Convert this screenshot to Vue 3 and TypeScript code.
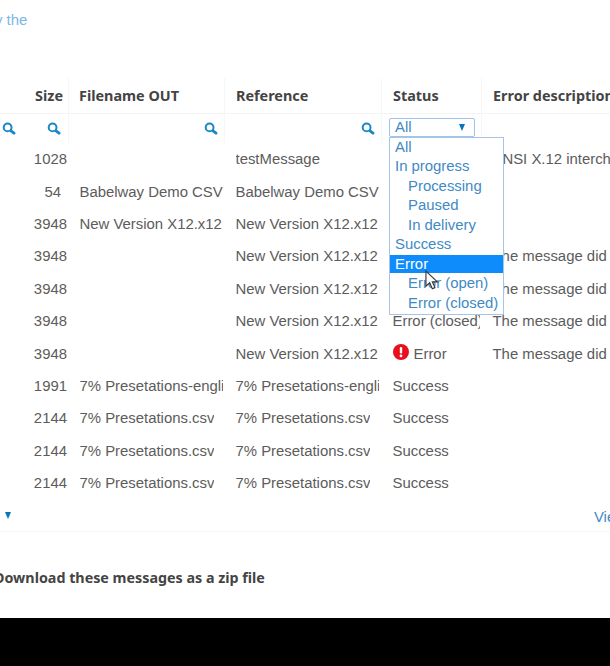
<script setup lang="ts">
interface Row { size: string; out: string; ref: string; status: string; err: string; icon?: boolean }
const rows: Row[] = [
  { size: '1028', out: '', ref: 'testMessage', status: '', err: 'ANSI X.12 interchange' },
  { size: '54', out: 'Babelway Demo CSV', ref: 'Babelway Demo CSV', status: '', err: '' },
  { size: '3948', out: 'New Version X12.x12', ref: 'New Version X12.x12', status: '', err: '' },
  { size: '3948', out: '', ref: 'New Version X12.x12', status: '', err: 'The message did not' },
  { size: '3948', out: '', ref: 'New Version X12.x12', status: '', err: 'The message did not' },
  { size: '3948', out: '', ref: 'New Version X12.x12', status: 'Error (closed)', err: 'The message did not' },
  { size: '3948', out: '', ref: 'New Version X12.x12', status: 'Error', err: 'The message did not', icon: true },
  { size: '1991', out: '7% Presetations-english.csv', ref: '7% Presetations-english.csv', status: 'Success', err: '' },
  { size: '2144', out: '7% Presetations.csv', ref: '7% Presetations.csv', status: 'Success', err: '' },
  { size: '2144', out: '7% Presetations.csv', ref: '7% Presetations.csv', status: 'Success', err: '' },
  { size: '2144', out: '7% Presetations.csv', ref: '7% Presetations.csv', status: 'Success', err: '' },
]
const options = [
  { t: 'All' }, { t: 'In progress' }, { t: 'Processing', sub: true }, { t: 'Paused', sub: true },
  { t: 'In delivery', sub: true }, { t: 'Success' }, { t: 'Error', active: true },
  { t: 'Error (open)', sub: true }, { t: 'Error (closed)', sub: true },
]
</script>

<template>
  <div class="page">
    <div class="content">
      <div class="intro">y the</div>
      <div class="table">
        <div class="row head">
          <div class="c c0"></div>
          <div class="c c1 right">Size</div>
          <div class="c c2 sep">Filename OUT</div>
          <div class="c c3 sep">Reference</div>
          <div class="c c4 sep">Status</div>
          <div class="c c5 sep">Error description</div>
        </div>
        <div class="row filter">
          <div class="c c0 icon-cell">
            <svg class="mag" viewBox="0 0 14 13"><circle cx="5.6" cy="5.4" r="3.9" /><path class="h" d="M9 8.8l3 2.4" /></svg>
          </div>
          <div class="c c1 icon-cell">
            <svg class="mag" viewBox="0 0 14 13"><circle cx="5.6" cy="5.4" r="3.9" /><path class="h" d="M9 8.8l3 2.4" /></svg>
          </div>
          <div class="c c2 sep icon-cell">
            <svg class="mag" viewBox="0 0 14 13"><circle cx="5.6" cy="5.4" r="3.9" /><path class="h" d="M9 8.8l3 2.4" /></svg>
          </div>
          <div class="c c3 sep icon-cell">
            <svg class="mag" viewBox="0 0 14 13"><circle cx="5.6" cy="5.4" r="3.9" /><path class="h" d="M9 8.8l3 2.4" /></svg>
          </div>
          <div class="c c4 sep select-cell">
            <div class="select">
              <span>All</span>
              <span class="caret"></span>
            </div>
            <ul class="menu">
              <li v-for="o in options" :key="o.t" :class="{ sub: o.sub, active: o.active }">{{ o.t }}</li>
            </ul>
            <svg class="cursor" viewBox="0 0 16 22">
              <path d="M1 1v16l4-3.6 2.8 6.4 2.8-1.2-2.8-6.2h5.4z" />
            </svg>
          </div>
          <div class="c c5 sep"></div>
        </div>
        <div v-for="(r, i) in rows" :key="i" class="row body">
          <div class="c c0"></div>
          <div class="c c1 right" :class="{ short: r.size.length < 4 }">{{ r.size }}</div>
          <div class="c c2"><span class="t">{{ r.out }}</span></div>
          <div class="c c3"><span class="t">{{ r.ref }}</span></div>
          <div class="c c4 status">
            <svg v-if="r.icon" class="err" viewBox="0 0 16 16">
              <circle cx="8" cy="8" r="8" fill="#e8101c" />
              <rect x="6.8" y="3" width="2.4" height="6.6" rx="1" fill="#fff" />
              <circle cx="8" cy="11.9" r="1.4" fill="#fff" />
            </svg>
            <span class="s">{{ r.status }}</span>
          </div>
          <div class="c c5 clip">{{ r.err }}</div>
        </div>
        <div class="pager">
          <span class="down"></span>
          <span class="view">View all</span>
        </div>
      </div>
      <div class="download">Download these messages as a zip file</div>
    </div>
    <div class="bar"></div>
  </div>
</template>

<style scoped>
.page {
  width: 610px;
  height: 666px;
  overflow: hidden;
  display: flex;
  flex-direction: column;
  background: #000;
  font-family: "Liberation Sans", Arial, sans-serif;
  font-size: 14.9px;
  color: #5c5c5c;
}
.content {
  height: 618px;
  flex: none;
  background: #fff;
  overflow: hidden;
}
.intro {
  height: 78px;
  box-sizing: border-box;
  padding-top: 11px;
  margin-left: -5px;
  color: #7ab8e8;
  line-height: 18px;
}
.table {
  width: 610px;
}
.row {
  display: grid;
  grid-template-columns: 24px 44px 156px 157px 100px 129px;
}
.head {
  height: 36px;
  font-family: "Noto Sans", "Open Sans", sans-serif;
  font-weight: 700;
  font-size: 14.4px;
  color: #444;
  border-bottom: 1px solid #f2f4f6;
  box-sizing: border-box;
}
.filter {
  height: 29px;
}
.body {
  height: 32.4px;
}
.c {
  display: flex;
  align-items: center;
  white-space: nowrap;
  padding-left: 11px;
  box-sizing: border-box;
  min-width: 0;
}
.head .c2 { padding-left: 10px; }
.body .c2, .body .c3, .body .c4, .body .c5 { padding-left: 11.5px; }
.sep { border-left: 1px solid #f6f7f9; }
.right { justify-content: flex-end; padding: 0 1px 0 0; }
.right.short { padding-right: 7px; }
.clip { overflow: hidden; }
.t {
  display: block;
  max-width: 143px;
  overflow: hidden;
}
.s {
  display: block;
  max-width: 87px;
  overflow: hidden;
}
.head .c1 { padding-right: 5px; }
.c0 { padding: 0; }
.icon-cell {
  justify-content: flex-end;
  padding: 0 6px 0 0;
}
.filter .c0 { padding-right: 8px; }
.filter .c1 { padding-right: 7px; }
.mag {
  width: 14px;
  height: 13px;
  fill: none;
  stroke: #1b87c6;
  stroke-width: 2;
  stroke-linecap: round;
}
.mag .h { stroke-width: 2.8; }
.select-cell {
  position: relative;
  padding-left: 7px;
  overflow: visible;
}
.select {
  width: 86px;
  height: 19px;
  box-sizing: border-box;
  border: 1px solid #9cc4ec;
  border-radius: 2px;
  padding: 0 9px 0 5px;
  display: flex;
  align-items: center;
  justify-content: space-between;
  color: #3f8ac4;
  line-height: 17px;
  margin-top: -2px;
}
.caret {
  width: 0;
  height: 0;
  border-left: 3.5px solid transparent;
  border-right: 3.5px solid transparent;
  border-top: 7px solid #0a74b8;
}
.menu {
  position: absolute;
  top: 23px;
  left: 7px;
  z-index: 2;
  width: 115px;
  margin: 0;
  padding: 0;
  list-style: none;
  box-sizing: border-box;
  background: #fff;
  border: 1px solid #a9c3e4;
  color: #3f8ac4;
  line-height: 19.4px;
  height: 178px;
}
.menu li { padding-left: 5px; height: 19.4px; }
.menu li.sub { padding-left: 18px; }
.menu li.active {
  background: #0f8cfb;
  color: #fff;
  margin-top: 1px;
  height: 18px;
  line-height: 18px;
  margin-bottom: 1px;
}
.cursor {
  position: absolute;
  top: 156px;
  left: 43px;
  width: 15px;
  height: 21px;
  z-index: 3;
  fill: #fff;
  stroke: #333;
  stroke-width: 1.2;
}
.err {
  width: 16px;
  height: 16px;
  flex: none;
  margin: -3px 5px 0 0;
}
.pager {
  height: 33px;
  display: flex;
  align-items: center;
  justify-content: space-between;
  padding: 0 0 0 5px;
  border-bottom: 1px solid #f7f8f9;
  box-sizing: border-box;
}
.down {
  width: 0;
  height: 0;
  border-left: 3.5px solid transparent;
  border-right: 3.5px solid transparent;
  border-top: 7px solid #0a74b8;
}
.view {
  color: #3f8ac4;
  margin-right: -35px;
  margin-top: 4px;
}
.download {
  margin-top: 37px;
  margin-left: -6px;
  font-family: "Noto Sans", "Open Sans", sans-serif;
  font-weight: 700;
  font-size: 14.3px;
  color: #444;
  line-height: 18px;
}
.bar {
  flex: 1;
  background: #000;
}
</style>
